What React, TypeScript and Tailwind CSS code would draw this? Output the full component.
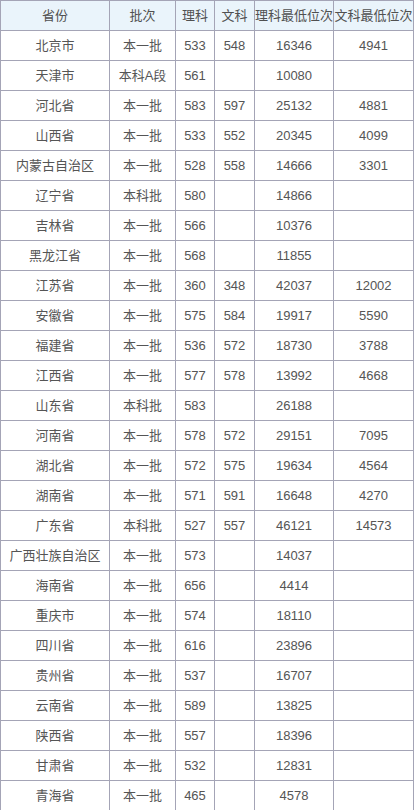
const rows: [string, string, string, string, string, string][] = [
  ["北京市", "本一批", "533", "548", "16346", "4941"],
  ["天津市", "本科A段", "561", "", "10080", ""],
  ["河北省", "本一批", "583", "597", "25132", "4881"],
  ["山西省", "本一批", "533", "552", "20345", "4099"],
  ["内蒙古自治区", "本一批", "528", "558", "14666", "3301"],
  ["辽宁省", "本科批", "580", "", "14866", ""],
  ["吉林省", "本一批", "566", "", "10376", ""],
  ["黑龙江省", "本一批", "568", "", "11855", ""],
  ["江苏省", "本一批", "360", "348", "42037", "12002"],
  ["安徽省", "本一批", "575", "584", "19917", "5590"],
  ["福建省", "本一批", "536", "572", "18730", "3788"],
  ["江西省", "本一批", "577", "578", "13992", "4668"],
  ["山东省", "本科批", "583", "", "26188", ""],
  ["河南省", "本一批", "578", "572", "29151", "7095"],
  ["湖北省", "本一批", "572", "575", "19634", "4564"],
  ["湖南省", "本一批", "571", "591", "16648", "4270"],
  ["广东省", "本科批", "527", "557", "46121", "14573"],
  ["广西壮族自治区", "本一批", "573", "", "14037", ""],
  ["海南省", "本一批", "656", "", "4414", ""],
  ["重庆市", "本一批", "574", "", "18110", ""],
  ["四川省", "本一批", "616", "", "23896", ""],
  ["贵州省", "本一批", "537", "", "16707", ""],
  ["云南省", "本一批", "589", "", "13825", ""],
  ["陕西省", "本一批", "557", "", "18396", ""],
  ["甘肃省", "本一批", "532", "", "12831", ""],
  ["青海省", "本一批", "465", "", "4578", ""],
];

const headers = ["省份", "批次", "理科", "文科", "理科最低位次", "文科最低位次"];

export default function App() {
  return (
    <div
      className="h-[810px] w-[414px] overflow-hidden bg-white text-[13px] text-[#555]"
      style={{ fontFamily: '"Liberation Sans", "Noto Sans CJK SC", sans-serif' }}
    >
      <table className="w-[413px] table-fixed border-collapse">
        <colgroup>
          <col className="w-[109px]" />
          <col className="w-[66px]" />
          <col className="w-[39px]" />
          <col className="w-[40px]" />
          <col className="w-[79px]" />
          <col className="w-[80px]" />
        </colgroup>
        <thead>
          <tr className="h-[30px] bg-[#eaf4fb]">
            {headers.map((h) => (
              <th
                key={h}
                className="whitespace-nowrap border border-[#a4a4b6] p-0 text-center font-normal text-[#505050]"
              >
                {h}
              </th>
            ))}
          </tr>
        </thead>
        <tbody>
          {rows.map((r) => (
            <tr key={r[0]} className="h-[30px]">
              {r.map((c, i) => (
                <td
                  key={i}
                  className="whitespace-nowrap border border-[#a4a4b6] p-0 text-center"
                >
                  {c}
                </td>
              ))}
            </tr>
          ))}
        </tbody>
      </table>
    </div>
  );
}
